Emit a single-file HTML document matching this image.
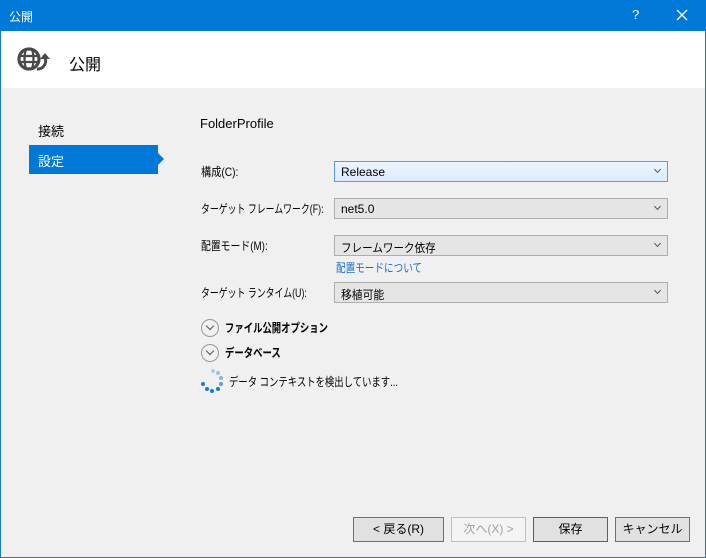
<!DOCTYPE html>
<html><head><meta charset="utf-8"><style>
*{box-sizing:border-box;margin:0;padding:0}
body{width:706px;height:558px;overflow:hidden;font-family:"Liberation Sans","Noto Sans CJK JP",sans-serif;font-size:12px;color:#000;background:#f0f0f0;position:relative}
.win{position:absolute;left:0;top:0;width:706px;height:558px;border:1px solid #1979ca;border-top:none}
.title{position:absolute;left:0;top:0;width:706px;height:31px;background:#0078d7;color:#fff}
.hdr{position:absolute;left:1px;top:31px;width:704px;height:57px;background:#fff}
.a{position:absolute;white-space:nowrap}
.n{transform-origin:left center}
.dd{position:absolute;left:334px;width:334px;height:21px;border:1px solid #adadad;background:#e5e5e5;padding:3px 0 0 6px;white-space:nowrap}
.dd span{display:inline-block;transform-origin:left center}
.dd:after{content:"";position:absolute;right:7px;top:5px;width:4px;height:4px;border-right:1.3px solid #555;border-bottom:1.3px solid #555;transform:rotate(45deg)}
.btn{position:absolute;top:517px;height:25px;border:1px solid #adadad;background:#e1e1e1;text-align:center;line-height:23px;font-size:12px}
.exp{position:absolute;left:201px;width:18px;height:18px;border:1px solid #999;border-radius:50%}
.exp:after{content:"";position:absolute;left:5px;top:3px;width:5px;height:5px;border-right:1.5px solid #555;border-bottom:1.5px solid #555;transform:rotate(45deg)}
.dot{position:absolute;width:4px;height:4px;border-radius:50%;background:#1c7ad0}
</style></head><body>
<div class="win"></div>
<div class="title">
<div class="a" style="left:9px;top:8px;font-size:12px">公開</div>
<div class="a" style="left:632px;top:7px;font-size:13px">?</div>
<svg class="a" style="left:676px;top:9px" width="12" height="12"><path d="M1 1L11 11M11 1L1 11" stroke="#fff" stroke-width="1.3"/></svg>
</div>
<div class="hdr">
<svg class="a" style="left:15px;top:13px" width="34" height="30" viewBox="0 0 34 30">
<circle cx="13" cy="15" r="10" fill="none" stroke="#4a4a4a" stroke-width="3.2"/>
<path d="M3 12H23M3 18H23M10 5Q7 15 10 25M16 5Q19 15 16 25" fill="none" stroke="#4a4a4a" stroke-width="2.2"/>
<path d="M21 25A8 8 0 0 0 29 14" fill="none" stroke="#4a4a4a" stroke-width="3"/>
<path d="M24 15L29 9L34 15Z" fill="#4a4a4a"/>
</svg>
<div class="a" style="left:68px;top:20px;font-size:16px">公開</div>
</div>
<div class="a" style="left:38px;top:121px;font-size:13px">接続</div>
<div class="a" style="left:29px;top:145px;width:129px;height:29px;background:#0078d7"></div>
<div class="a" style="left:158px;top:153px;width:0;height:0;border-left:6px solid #0078d7;border-top:6px solid transparent;border-bottom:6px solid transparent"></div>
<div class="a" style="left:38px;top:151px;font-size:13px;color:#fff">設定</div>
<div class="a" style="left:200px;top:116px;font-size:13px">FolderProfile</div>
<div class="a n" style="left:201px;top:163px;transform:scaleX(.85)">構成(C):</div>
<div class="dd" style="top:161px;border-color:#569de5;background:linear-gradient(#ecf4fc,#dcecfc)">Release</div>
<div class="a n" style="left:201px;top:200px;transform:scaleX(.74)">ターゲット フレームワーク(F):</div>
<div class="dd" style="top:198px">net5.0</div>
<div class="a n" style="left:201px;top:237px;transform:scaleX(.82)">配置モード(M):</div>
<div class="dd" style="top:235px"><span style="transform:scaleX(.88)">フレームワーク依存</span></div>
<div class="a n" style="left:336px;top:259px;color:#1a6fc9;transform:scaleX(.8)">配置モードについて</div>
<div class="a n" style="left:201px;top:284px;transform:scaleX(.74)">ターゲット ランタイム(U):</div>
<div class="dd" style="top:282px"><span style="transform:scaleX(.9)">移植可能</span></div>
<div class="exp" style="top:319px"></div>
<div class="a n" style="left:225px;top:319px;font-weight:bold;transform:scaleX(.78)">ファイル公開オプション</div>
<div class="exp" style="top:344px"></div>
<div class="a n" style="left:225px;top:344px;font-weight:bold;transform:scaleX(.78)">データベース</div>
<div class="dot" style="left:211px;top:369px;opacity:.3"></div>
<div class="dot" style="left:216px;top:371px;opacity:.4"></div>
<div class="dot" style="left:219px;top:376px;opacity:.5"></div>
<div class="dot" style="left:219px;top:382px;opacity:.7"></div>
<div class="dot" style="left:216px;top:387px"></div>
<div class="dot" style="left:210px;top:389px"></div>
<div class="dot" style="left:205px;top:387px"></div>
<div class="dot" style="left:201px;top:382px"></div>
<div class="a n" style="left:229px;top:373px;transform:scaleX(.78)">データ コンテキストを検出しています...</div>
<div class="btn" style="left:353px;width:91px;border-color:#707070">&lt; 戻る(R)</div>
<div class="btn" style="left:451px;width:75px;background:#f4f4f4;border-color:#bfbfbf;color:#a0a0a0">次へ(X) &gt;</div>
<div class="btn" style="left:533px;width:75px;border-color:#0078d7">保存</div>
<div class="btn" style="left:615px;width:75px;border-color:#707070">キャンセル</div>
</body></html>
